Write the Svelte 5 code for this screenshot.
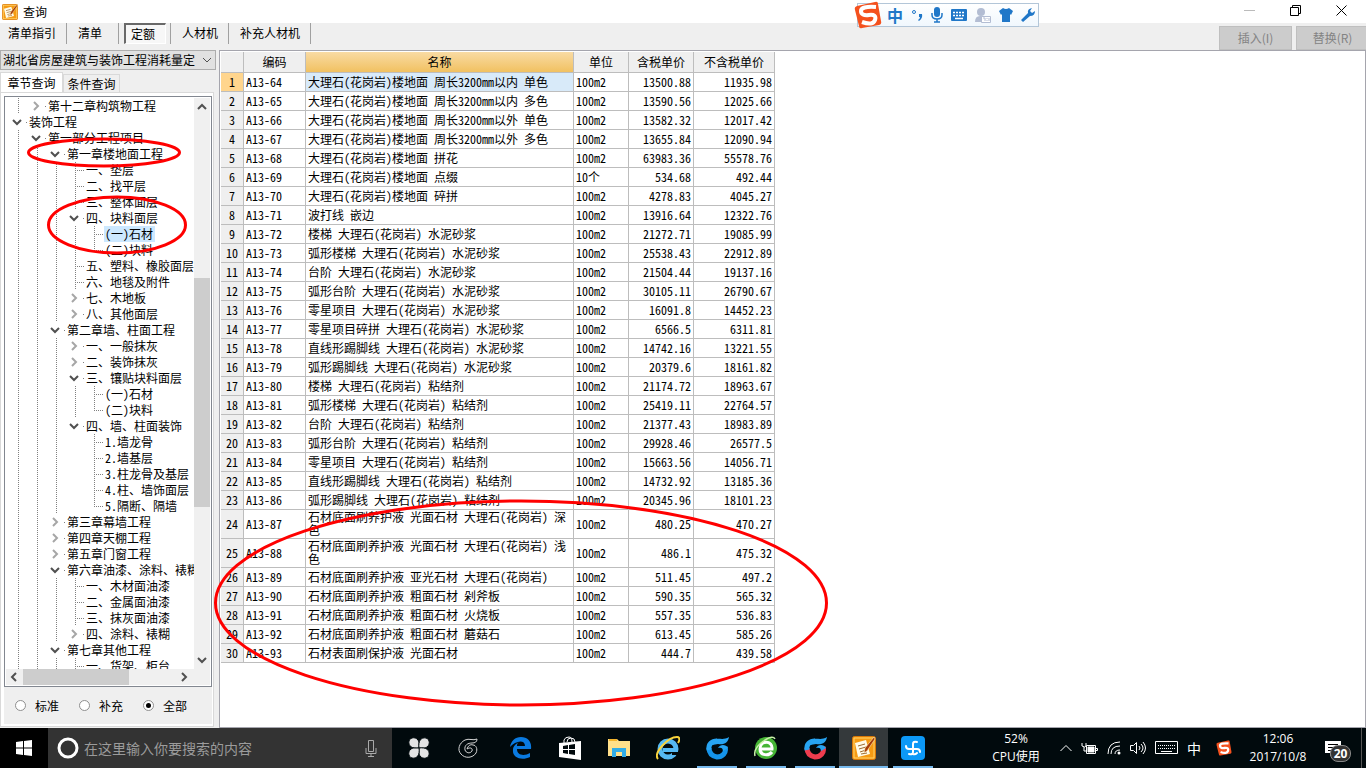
<script lang="ts">
type NodeState = 'open' | 'closed' | 'leaf';
type TreeNode = { depth: number; state: NodeState; text: string };
type Row = [code: string, name: string, unit: string, taxed: string, untaxed: string];

const menu = ['清单指引', '清单', '定额', '人材机', '补充人材机'];
const scopes = ['标准', '补充', '全部'];

const node = (depth: number, state: NodeState, text: string): TreeNode => ({ depth, state, text });

const nodes: TreeNode[] = [
	node(1, 'closed', '第十二章构筑物工程'),
	node(0, 'open', '装饰工程'),
	node(1, 'open', '第一部分工程项目'),
	node(2, 'open', '第一章楼地面工程'),
	node(3, 'leaf', '一、垫层'),
	node(3, 'leaf', '二、找平层'),
	node(3, 'leaf', '三、整体面层'),
	node(3, 'open', '四、块料面层'),
	node(4, 'leaf', '(一)石材'),
	node(4, 'leaf', '(二)块料'),
	node(3, 'leaf', '五、塑料、橡胶面层'),
	node(3, 'leaf', '六、地毯及附件'),
	node(3, 'closed', '七、木地板'),
	node(3, 'closed', '八、其他面层'),
	node(2, 'open', '第二章墙、柱面工程'),
	node(3, 'closed', '一、一般抹灰'),
	node(3, 'closed', '二、装饰抹灰'),
	node(3, 'open', '三、镶贴块料面层'),
	node(4, 'leaf', '(一)石材'),
	node(4, 'leaf', '(二)块料'),
	node(3, 'open', '四、墙、柱面装饰'),
	node(4, 'leaf', '1.墙龙骨'),
	node(4, 'leaf', '2.墙基层'),
	node(4, 'leaf', '3.柱龙骨及基层'),
	node(4, 'leaf', '4.柱、墙饰面层'),
	node(4, 'leaf', '5.隔断、隔墙'),
	node(2, 'closed', '第三章幕墙工程'),
	node(2, 'closed', '第四章天棚工程'),
	node(2, 'closed', '第五章门窗工程'),
	node(2, 'open', '第六章油漆、涂料、裱糊'),
	node(3, 'leaf', '一、木材面油漆'),
	node(3, 'leaf', '二、金属面油漆'),
	node(3, 'leaf', '三、抹灰面油漆'),
	node(3, 'closed', '四、涂料、裱糊'),
	node(2, 'open', '第七章其他工程'),
	node(3, 'leaf', '一、货架、柜台')
];

const rows: Row[] = [
	['A13-64', '大理石(花岗岩)楼地面 周长3200mm以内 单色', '100m2', '13500.88', '11935.98'],
	['A13-65', '大理石(花岗岩)楼地面 周长3200mm以内 多色', '100m2', '13590.56', '12025.66'],
	['A13-66', '大理石(花岗岩)楼地面 周长3200mm以外 单色', '100m2', '13582.32', '12017.42'],
	['A13-67', '大理石(花岗岩)楼地面 周长3200mm以外 多色', '100m2', '13655.84', '12090.94'],
	['A13-68', '大理石(花岗岩)楼地面 拼花', '100m2', '63983.36', '55578.76'],
	['A13-69', '大理石(花岗岩)楼地面 点缀', '10个', '534.68', '492.44'],
	['A13-70', '大理石(花岗岩)楼地面 碎拼', '100m2', '4278.83', '4045.27'],
	['A13-71', '波打线 嵌边', '100m2', '13916.64', '12322.76'],
	['A13-72', '楼梯 大理石(花岗岩) 水泥砂浆', '100m2', '21272.71', '19085.99'],
	['A13-73', '弧形楼梯 大理石(花岗岩) 水泥砂浆', '100m2', '25538.43', '22912.89'],
	['A13-74', '台阶 大理石(花岗岩) 水泥砂浆', '100m2', '21504.44', '19137.16'],
	['A13-75', '弧形台阶 大理石(花岗岩) 水泥砂浆', '100m2', '30105.11', '26790.67'],
	['A13-76', '零星项目 大理石(花岗岩) 水泥砂浆', '100m2', '16091.8', '14452.23'],
	['A13-77', '零星项目碎拼 大理石(花岗岩) 水泥砂浆', '100m2', '6566.5', '6311.81'],
	['A13-78', '直线形踢脚线 大理石(花岗岩) 水泥砂浆', '100m2', '14742.16', '13221.55'],
	['A13-79', '弧形踢脚线 大理石(花岗岩) 水泥砂浆', '100m2', '20379.6', '18161.82'],
	['A13-80', '楼梯 大理石(花岗岩) 粘结剂', '100m2', '21174.72', '18963.67'],
	['A13-81', '弧形楼梯 大理石(花岗岩) 粘结剂', '100m2', '25419.11', '22764.57'],
	['A13-82', '台阶 大理石(花岗岩) 粘结剂', '100m2', '21377.43', '18983.89'],
	['A13-83', '弧形台阶 大理石(花岗岩) 粘结剂', '100m2', '29928.46', '26577.5'],
	['A13-84', '零星项目 大理石(花岗岩) 粘结剂', '100m2', '15663.56', '14056.71'],
	['A13-85', '直线形踢脚线 大理石(花岗岩) 粘结剂', '100m2', '14732.92', '13185.36'],
	['A13-86', '弧形踢脚线 大理石(花岗岩) 粘结剂', '100m2', '20345.96', '18101.23'],
	['A13-87', '石材底面刷养护液 光面石材 大理石(花岗岩) 深色', '100m2', '480.25', '470.27'],
	['A13-88', '石材底面刷养护液 光面石材 大理石(花岗岩) 浅色', '100m2', '486.1', '475.32'],
	['A13-89', '石材底面刷养护液 亚光石材 大理石(花岗岩)', '100m2', '511.45', '497.2'],
	['A13-90', '石材底面刷养护液 粗面石材 剁斧板', '100m2', '590.35', '565.32'],
	['A13-91', '石材底面刷养护液 粗面石材 火烧板', '100m2', '557.35', '536.83'],
	['A13-92', '石材底面刷养护液 粗面石材 蘑菇石', '100m2', '613.45', '585.26'],
	['A13-93', '石材表面刷保护液 光面石材', '100m2', '444.7', '439.58']
];

let activeMenu = $state('定额');
let scope = $state('全部');
let selectedNode = $state(8);
let selectedRow = $state(0);

// the list is cut off at the bottom, so a level that never closes keeps its line
function continues(index: number, level: number): boolean {
	for (const next of nodes.slice(index + 1)) {
		if (next.depth < level) return false;
		if (next.depth === level) return true;
	}
	return true;
}

function guides(index: number): string[] {
	const { depth, state } = nodes[index];
	const out: string[] = [];
	for (let k = 0; k < depth; k++) out.push(continues(index, k) ? 'line' : '');
	out.push(state === 'leaf' ? (continues(index, depth) ? 'line tick' : 'half tick') : '');
	return out;
}
</script>

{#snippet chevron(dir: string)}
	<svg class="chevron" width="10" height="10" viewBox="0 0 10 10" aria-hidden="true">
		{#if dir === 'down'}<path d="M1 3l4 4 4-4" />
		{:else if dir === 'up'}<path d="M1 7l4-4 4 4" />
		{:else if dir === 'left'}<path d="M7 1L3 5l4 4" />
		{:else}<path d="M3 1l4 4-4 4" />{/if}
	</svg>
{/snippet}

{#snippet noteIcon(size: number)}
	<svg width={size} height={size} viewBox="0 0 24 24" aria-hidden="true">
		<rect x="0.5" y="0.5" width="23" height="23" rx="2" fill="#f59a12" stroke="#d97706" />
		<rect x="2" y="2" width="20" height="20" fill="none" stroke="#ffd268" />
		<path d="M3 7l11-3 4 14-12 3z" fill="#fffbe8" />
		<path d="M6 10l7-2M7 13l7-2M8 16l6-2M9 18l6-1" stroke="#9c6a32" fill="none" />
		<path d="M22 1l-9 11-1 5 3-2 8-12z" fill="#a63c08" stroke="#fff0bd" stroke-width="0.6" />
	</svg>
{/snippet}

{#snippet sogou(size: number)}
	<svg width={size} height={size} viewBox="0 0 28 28" aria-hidden="true">
		<path d="M3 5L21 1q3-1 3 2l3 17q1 3-2 4L8 27q-3 1-3-2L1 9q-1-3 2-4z" fill="#f4511e" />
		<path d="M22 6Q7 5 7 10t8 4 6 5-13 2" fill="none" stroke="#fff" stroke-width="4" />
	</svg>
{/snippet}

{#snippet gSwirl(tail: string)}
	<svg width="24" height="24" viewBox="0 0 24 24" fill="none" aria-hidden="true">
		<path d="M20 11c2 6-3 10-8 10-5-1-8-4-8-9" stroke={tail} stroke-width="5" />
		<path d="M4 14C3 8 7 5 12 5" stroke="#27a4f2" stroke-width="5" />
		<path d="M24 1c-1 6-5 8-11 7L7 9l1-5c5-3 10 1 16-3z" fill="#27a4f2" />
		<path d="M23 12c-2-4-8-4-10 0 3-1 5 0 5 3z" fill="#27a4f2" />
	</svg>
{/snippet}

<div class="screen">
	<header class="titlebar">
		{@render noteIcon(16)}
		<h1>查询</h1>
		<div class="window-buttons">
			<button type="button" class="minimize" aria-label="最小化"><svg width="11" height="11"><path d="M0 5.5h11" /></svg></button>
			<button type="button" aria-label="还原"><svg width="11" height="11"><path d="M2.5 2.500v-2h8v8h-2M.5 2.500h8v8h-8z" /></svg></button>
			<button type="button" aria-label="关闭"><svg width="11" height="11"><path d="M.5.5l10 10M10.500.5l-10 10" /></svg></button>
		</div>
	</header>

	<nav class="toolbar">
		{#each menu as item}
			<div class="menu-item">
				<button type="button" class:pressed={activeMenu === item} onclick={() => (activeMenu = item)}>{item}</button>
			</div>
		{/each}
		<div class="actions">
			<button type="button" disabled>插入(I)</button>
			<button type="button" disabled>替换(R)</button>
		</div>
	</nav>

	<main>
		<aside>
			<div class="library">
				<select aria-label="定额库">
					<option>湖北省房屋建筑与装饰工程消耗量定</option>
				</select>
				{@render chevron('down')}
			</div>
			<div class="tabs" role="tablist">
				<button type="button" role="tab" aria-selected="true">章节查询</button>
				<button type="button" role="tab" aria-selected="false">条件查询</button>
			</div>
			<div class="pane">
				<div class="tree-box">
					<div class="tree-view">
						<ul role="tree">
							{#each nodes as item, i}
								<li role="treeitem" aria-selected={selectedNode === i}>
									{#each guides(i) as guide, k}
										<span class="guide {guide}">
											{#if k === item.depth && item.state !== 'leaf'}
												<span class="expander" class:closed={item.state === 'closed'}>
													{@render chevron(item.state === 'open' ? 'down' : 'right')}
												</span>
											{/if}
										</span>
									{/each}
									<button type="button" class:selected={selectedNode === i} onclick={() => (selectedNode = i)}>{item.text}</button>
								</li>
							{/each}
						</ul>
						<div class="scroll vertical">
							{@render chevron('up')}
							<div class="track"><span class="before"></span><span class="thumb"></span><span class="after"></span></div>
							{@render chevron('down')}
						</div>
					</div>
					<div class="scroll horizontal">
						{@render chevron('left')}
						<div class="track"><span class="thumb"></span><span class="after"></span></div>
						{@render chevron('right')}
					</div>
				</div>
				<div class="scopes">
					{#each scopes as option}
						<label><input type="radio" name="scope" value={option} bind:group={scope} />{option}</label>
					{/each}
				</div>
			</div>
		</aside>

		<section class="results">
			<table>
				<colgroup>
					<col class="c-index" /><col class="c-code" /><col class="c-name" /><col class="c-unit" /><col class="c-taxed" /><col class="c-untaxed" />
				</colgroup>
				<thead>
					<tr>
						<th></th>
						<th>编码</th>
						<th class="sorted">名称</th>
						<th>单位</th>
						<th>含税单价</th>
						<th>不含税单价</th>
					</tr>
				</thead>
				<tbody>
					{#each rows as [code, name, unit, taxed, untaxed], i}
						<tr class:current={selectedRow === i} onclick={() => (selectedRow = i)}>
							<th scope="row">{i + 1}</th>
							<td>{code}</td>
							<td class="name">{name}</td>
							<td>{unit}</td>
							<td class="number">{taxed}</td>
							<td class="number">{untaxed}</td>
						</tr>
					{/each}
				</tbody>
			</table>
		</section>
	</main>

	<footer class="taskbar">
		<button type="button" class="start" aria-label="开始">
			<svg width="16" height="16" viewBox="0 0 16 16"><path d="M0 2l7-1v6.500H0zM8 1l8-1v7.500H8zM0 8.500h7V15l-7-1zM8 8.500h8V16l-8-1z" fill="#fff" /></svg>
		</button>
		<label class="search">
			<svg width="22" height="22" viewBox="0 0 22 22" aria-hidden="true"><circle cx="11" cy="11" r="9" fill="none" stroke="#fff" stroke-width="3" /></svg>
			<input type="text" placeholder="在这里输入你要搜索的内容" aria-label="搜索" />
			<svg width="12" height="17" viewBox="0 0 12 17" aria-hidden="true"><path d="M3.500.5h5v11h-5zM1 8v5.500h10V8M6 14v2.500M3 16.500h6" fill="none" stroke="#aaa" /></svg>
		</label>

		<div class="apps">
			<button type="button" aria-label="应用">
				<svg width="22" height="22" viewBox="0 0 22 22" fill="#e4e4e4" stroke="#010a0d">
					<path d="M11 11C4 12 0 9 1 4c1-4 8-5 10 1z" />
					<path d="M11 11C10 4 13 0 18 1c4 1 5 8-1 10z" />
					<path d="M11 11c7-1 11 2 10 7-1 4-8 5-10-1z" />
					<path d="M11 11c1 7-2 11-7 10-4-1-5-8 1-10z" />
				</svg>
			</button>
			<button type="button" aria-label="广联达">
				<svg width="20" height="20" viewBox="0 0 20 20" fill="none" stroke="#d5d5d5">
					<path d="M19 1c-4 2-8-1-12 1-6 3-8 10-4 14 4 5 12 4 15-1 2-4 0-8-3-8-3-1-5 1-6 4 3-2 6-1 5 2-2 3-6 2-7-1-1-5 3-7 7-7 3 0 5-1 5-4z" />
				</svg>
			</button>
			<button type="button" class="edge" aria-label="Edge">
				<svg width="22" height="22" viewBox="0 0 22 22"><path d="M0 10C1 4 5 0 11 0c7 0 11 5 10 12H7c0 7 8 7 13 4v4C12 24 2 21 3 13c0-4 3-6 6-8-2 1-2 3-2 4h8c0-7-10-5-15 1z" fill="#0a7ae0" /></svg>
			</button>
			<button type="button" aria-label="应用商店">
				<svg width="22" height="24" viewBox="0 0 22 24"><path d="M0 7l22-2v19L0 21z" fill="#fff" /><path d="M5 7V4q1-3 5-3 3 0 3 5M8 6q0-4 4-4t4 4" fill="none" stroke="#fff" /><path d="M4 10l5-1v4H4zM10 9l6-1v5h-6zM4 14h5v4l-5-1zM10 14h6v5l-6-1z" fill="#010a0d" /></svg>
			</button>
			<button type="button" aria-label="文件资源管理器">
				<svg width="22" height="20" viewBox="0 0 22 20"><path d="M0 1h9l2 2h11v15H0z" fill="#ffe08a" /><path d="M1 1h8v2H1z" fill="#f4b52d" /><path d="M4 10h14v9h-4v-5H8v5H4z" fill="#31ace6" /></svg>
			</button>
			<button type="button" aria-label="Internet Explorer">
				<svg width="24" height="24" viewBox="0 0 24 24"><circle cx="12" cy="13" r="8" fill="none" stroke="#55b9f3" stroke-width="5" /><path d="M7 14h15" stroke="#55b9f3" stroke-width="4" /><path d="M16 16h8v3h-8z" fill="#010a0d" /><path d="M2 23C-3 17 12 1 21 1c3 0 3 3 1 6" fill="none" stroke="#f9d33c" stroke-width="2" /></svg>
			</button>
			<button type="button" class="running" aria-label="广联达计价">{@render gSwirl('#1494ea')}</button>
			<button type="button" class="running" aria-label="浏览器">
				<svg width="24" height="24" viewBox="0 0 24 24"><circle cx="12" cy="12" r="11" fill="#46b536" /><path d="M6 13h12c1-9-12-9-12 0 0 7 9 7 12 3" fill="none" stroke="#fff" stroke-width="3" /><path d="M1 20Q-1 12 11 4q8-5 10-1" fill="none" stroke="#c9f1a9" stroke-width="1.500" /></svg>
			</button>
			<button type="button" class="running" aria-label="广联达算量">{@render gSwirl('#ee3c4e')}</button>
			<button type="button" class="running active" aria-label="查询">{@render noteIcon(24)}</button>
			<button type="button" class="running" aria-label="助手">
				<svg width="24" height="24" viewBox="0 0 24 24"><rect width="24" height="24" rx="4" fill="#0c99f7" /><path d="M16 6q-4-1-4 2v8q0 3-4 2M5 10q0 3 3 3h8q3 0 3 3M12 18q2 1 4-1" fill="none" stroke="#fff" stroke-width="2" stroke-linecap="round" /></svg>
			</button>
		</div>

		<div class="tray">
			<div class="cpu"><span>52%</span><span>CPU使用</span></div>
			<svg width="12" height="8" viewBox="0 0 12 8" aria-hidden="true"><path d="M.5 7L6 1.500 11.500 7" /></svg>
			<svg width="17" height="13" viewBox="0 0 17 13" aria-hidden="true"><path d="M5.500 3.500h9v8h-9zM15 6.500h1.500v2H15M1 1v3q3 2 4 0V1M3 5v4h2" /><path d="M7 5h6v5H7z" fill="#fff" /></svg>
			<svg width="14" height="14" viewBox="0 0 14 14" aria-hidden="true"><path d="M1 13Q1 1 13 1M4 13q0-8 9-8M8 13q0-4 5-4" /><circle cx="12" cy="12" r="1.500" fill="#fff" /></svg>
			<svg width="16" height="14" viewBox="0 0 16 14" aria-hidden="true"><path d="M.5 4.500h3l3-3v11l-3-3h-3zM9 5q2 2 0 4M11 3q4 4 0 8M13 1q5 6 0 12" /></svg>
			<svg width="23" height="14" viewBox="0 0 23 14" aria-hidden="true"><path d="M.5.5h22v12H.5z" /><path d="M3 4.500h17M3 7.500h17" stroke-dasharray="1 1" /><path d="M6 10.500h11" /></svg>
			<span class="lang">中</span>
			{@render sogou(16)}
			<div class="clock"><span>12:06</span><span>2017/10/8</span></div>
			<button type="button" class="notices" aria-label="通知">
				<svg width="16" height="15" viewBox="0 0 16 15"><path d="M0 0h16v12H8l-3 3v-3H0z" fill="#fff" stroke="none" /><path d="M3 3.500h10M3 6.500h10M3 9.500h6" stroke="#000" /></svg>
				<span class="count">20</span>
			</button>
			<span class="peek"></span>
		</div>
	</footer>

	<div class="ime">
		{@render sogou(28)}
		<span>中</span>
		<svg width="12" height="12" viewBox="0 0 12 12"><circle cx="3" cy="3" r="1.500" fill="none" stroke="#2077c8" /><path d="M8 5h3q1 4-3 7l-1-1q2-1 2-3H8z" /></svg>
		<svg width="12" height="16" viewBox="0 0 12 16"><rect x="3" width="6" height="10" rx="3" /><path d="M1 6v2q0 4 5 4t5-4V6M6 12v3M3 15h6" fill="none" stroke="#2077c8" stroke-width="1.500" /></svg>
		<svg width="16" height="12" viewBox="0 0 16 12"><rect width="16" height="12" rx="1" /><path d="M2 3.500h12M2 6.500h12" stroke="#fff" stroke-width="1.500" stroke-dasharray="2 1" /><path d="M4 9.500h8" stroke="#fff" stroke-width="1.500" /></svg>
		<svg width="16" height="15" viewBox="0 0 16 15"><circle cx="6" cy="4" r="4" fill="#b3bdd3" /><path d="M0 14q0-6 5-6h4v6z" fill="#b3bdd3" /><path d="M6.500 8.500h9v6h-9z" fill="#fff" stroke="#b3bdd3" /><path d="M8 10h2v3M12 10v1M12 12v1M14 10v3" stroke="#b3bdd3" fill="none" /></svg>
		<svg width="14" height="14" viewBox="0 0 14 14"><path d="M4 0q3 2 6 0l4 3-2 4-1-1v8H3V6L2 7 0 3z" /></svg>
		<svg width="14" height="14" viewBox="0 0 14 14"><path d="M0 12l7-7q-1-4 4-5L9 3l2 2 3-2q0 5-5 5l-7 6z" /></svg>
	</div>

	<svg class="marks" aria-hidden="true">
		<ellipse cx="104" cy="152.5" rx="75.5" ry="13.5" />
		<ellipse cx="117" cy="225" rx="68.5" ry="28" />
		<ellipse cx="521" cy="603" rx="305.5" ry="102" />
	</svg>
</div>

<style>
:global(body) {
	margin: 0;
}

.screen {
	--face: #efefef;
	--grid: #bdbdbd;
	position: relative;
	display: flex;
	flex-direction: column;
	height: 100vh;
	overflow: hidden;
	font-family: 'Noto Sans CJK SC', sans-serif;
	font-size: 12px;
	line-height: 16px;
	color: #000;
	background: #fff;
	/* half-width Latin, so digits line up with the Chinese grid */
	font-feature-settings: 'hwid';
}

.screen * {
	box-sizing: border-box;
}

button,
input,
select {
	padding: 0;
	margin: 0;
	font: inherit;
	font-feature-settings: inherit;
	color: inherit;
	background: none;
	border: 0;
	border-radius: 0;
}

svg {
	flex-shrink: 0;
}

.chevron path {
	fill: none;
	stroke: #505050;
	stroke-width: 2;
}

.titlebar {
	display: flex;
	flex-shrink: 0;
	gap: 5px;
	align-items: center;
	height: 23px;
	padding-left: 2px;
}

h1 {
	margin: 0;
	font-size: 12px;
	font-weight: 400;
}

.window-buttons {
	display: flex;
	margin: 0 2px 2px auto;
}

.window-buttons button {
	display: flex;
	align-items: center;
	justify-content: center;
	width: 46px;
	height: 20px;
}

.window-buttons path {
	fill: none;
	stroke: #000;
}

.window-buttons .minimize path {
	stroke: #bbb;
}

.toolbar {
	display: flex;
	flex-shrink: 0;
	height: 27px;
	background: var(--face);
}

.menu-item {
	display: flex;
	height: 21px;
	padding: 0 4px 0 5px;
	border-right: 1px solid #a0a0a0;
}

.menu-item:first-child {
	padding-left: 2px;
}

.menu-item button {
	padding: 0 5px 2px;
	border: 1px solid transparent;
}

.menu-item:nth-child(2) button {
	padding-right: 11px;
}

.menu-item button.pressed {
	padding: 0 10px 0 5px;
	background: #f7f7f7;
	border-color: #696969 #fff #fff #696969;
	border-width: 2px 1px 1px 2px;
}

.actions {
	display: flex;
	gap: 4px;
	margin-right: -3px;
	margin-left: auto;
	font-feature-settings: normal;
}

.actions button {
	width: 73px;
	height: 24px;
	margin-top: 3px;
	color: #838383;
	background: #ccc;
	border: 1px solid #bfbfbf;
}

main {
	display: flex;
	flex: 1;
	min-height: 0;
}

aside {
	display: flex;
	flex-direction: column;
	flex-shrink: 0;
	width: 219px;
	padding-right: 3px;
	background: var(--face);
}

.library {
	display: grid;
	flex-shrink: 0;
	align-items: center;
	height: 20px;
	overflow: hidden;
	background: #e1e1e1;
	border: 1px solid #adadad;
}

.library select,
.library .chevron {
	grid-area: 1 / 1;
}

.library select {
	width: 100%;
	height: 18px;
	padding: 0 18px 0 2px;
	appearance: none;
}

.library .chevron {
	justify-self: end;
	margin-right: 3px;
	pointer-events: none;
}

.library .chevron path {
	stroke-width: 1;
}

.tabs {
	display: flex;
	flex-shrink: 0;
	align-items: flex-end;
	height: 22px;
	padding-top: 2px;
}

.tabs button {
	width: 57px;
	height: 18px;
	border: 1px solid #d9d9d9;
	border-bottom: 0;
}

.tabs button[aria-selected='true'] {
	width: 63px;
	height: 20px;
	background: #fff;
}

.pane {
	display: flex;
	flex: 1;
	flex-direction: column;
	min-height: 0;
	padding: 3px 1px 2px 3px;
	margin: 0 2px 1px 0;
	background: #fff;
	border: 1px solid #d9d9d9;
}

.tree-box {
	display: flex;
	flex: 1;
	flex-direction: column;
	min-height: 0;
	padding: 1px;
	background: #fff;
	border: 1px solid #828790;
}

.tree-view {
	display: flex;
	flex: 1;
	min-height: 0;
}

ul {
	flex: 1;
	min-width: 0;
	padding: 0 0 0 3px;
	margin: 0;
	overflow: hidden;
	list-style: none;
}

li {
	display: flex;
	height: 16px;
	white-space: nowrap;
}

li button {
	flex-shrink: 0;
	height: 16px;
	padding: 0 2px 0 1px;
	line-height: 16px;
}

li button.selected {
	background: #cce8ff;
}

.guide {
	display: grid;
	flex-shrink: 0;
	grid-template-rows: 8px 8px;
	grid-template-columns: 9px 10px;
	width: 19px;
}

.guide.line::before,
.guide.half::before {
	grid-row: 1 / 3;
	grid-column: 2;
	width: 1px;
	content: '';
	background: repeating-linear-gradient(#808080 0 1px, transparent 1px 2px);
}

.guide.half::before {
	grid-row: 1;
}

.guide.tick::after {
	grid-row: 2;
	grid-column: 2;
	width: 9px;
	height: 1px;
	content: '';
	background: repeating-linear-gradient(90deg, #808080 0 1px, transparent 1px 2px);
}

.expander {
	display: flex;
	grid-row: 1 / 3;
	grid-column: 1 / 3;
	align-items: center;
	padding-left: 3px;
}

.expander::after {
	width: 1px;
	height: 1px;
	margin-left: 4px;
	content: '';
	background: #808080;
}

.expander.closed .chevron path {
	stroke: #a6a6a6;
}

.scroll {
	display: flex;
	flex-shrink: 0;
	align-items: center;
	justify-content: space-between;
	background: #f0f0f0;
}

.scroll .track {
	display: flex;
	flex: 1;
}

.thumb {
	background: #cdcdcd;
}

.vertical {
	flex-direction: column;
	width: 16px;
	padding: 4px 0;
}

.vertical .track {
	flex-direction: column;
	width: 16px;
	margin: 3px 0;
}

.vertical .before {
	flex: 163;
}

.vertical .thumb {
	flex: 229;
}

.vertical .after {
	flex: 145;
}

.horizontal {
	height: 16px;
	padding: 0 21px 0 3px;
}

.horizontal .track {
	height: 16px;
	margin: 0 4px;
}

.horizontal .thumb {
	flex: 105;
}

.horizontal .after {
	flex: 46;
}

.scopes {
	display: flex;
	flex-shrink: 0;
	gap: 20px;
	height: 37px;
	padding-left: 11px;
	background: var(--face);
}

.scopes label {
	display: flex;
	gap: 9px;
	align-items: center;
}

.scopes input {
	display: grid;
	place-items: center;
	width: 11px;
	height: 11px;
	appearance: none;
	background: #fff;
	border: 1px solid #8f8f8f;
	border-radius: 50%;
}

.scopes input:checked::before {
	width: 5px;
	height: 5px;
	content: '';
	background: #000;
	border-radius: 50%;
}

.results {
	flex: 1;
	min-width: 0;
	padding: 1px;
	overflow: hidden;
	background: #fff;
	border: 1px solid #a5a5ad;
}

table {
	width: 554px;
	table-layout: fixed;
	border-spacing: 0;
}

.c-index {
	width: 23px;
}

.c-code {
	width: 62px;
}

.c-name {
	width: 268px;
}

.c-unit {
	width: 55px;
}

.c-taxed {
	width: 65px;
}

.c-untaxed {
	width: 81px;
}

th,
td {
	height: 19px;
	padding: 0 2px 2px;
	font-weight: 400;
	line-height: 13px;
	text-align: left;
	border: solid var(--grid);
	border-width: 0 1px 1px 0;
}

th {
	padding: 0 0 2px;
	text-align: center;
	background: var(--face);
}

thead th {
	height: 21px;
}

th.sorted {
	background: linear-gradient(#f9dba4, #f1c161);
}

.current th {
	background: #ffd58d;
}

.current .name {
	background: #d8eaf9;
}

td.number {
	text-align: right;
}

.taskbar {
	display: flex;
	flex-shrink: 0;
	height: 40px;
	color: #fff;
	background: #010a0d;
	font-feature-settings: normal;
}

.start {
	display: flex;
	flex-shrink: 0;
	align-items: center;
	justify-content: center;
	width: 48px;
	background: #000;
}

.search {
	display: flex;
	flex-shrink: 0;
	gap: 5px;
	align-items: center;
	width: 344px;
	padding: 0 15px 0 9px;
	background: #333;
}

.search input {
	flex: 1;
	min-width: 0;
	font-size: 14px;
}

.search input::placeholder {
	color: #9b9b9b;
	opacity: 1;
}

.apps {
	display: flex;
	flex-shrink: 0;
	padding-left: 2px;
}

.apps button {
	display: flex;
	align-items: center;
	justify-content: center;
	width: 49px;
}

.apps .edge {
	margin-left: 4px;
}

.apps .running {
	background: linear-gradient(#76b9ed, #76b9ed) bottom / 40px 2px no-repeat;
}

.apps .active {
	background: linear-gradient(#76b9ed, #76b9ed) bottom / 100% 2px no-repeat #34393b;
}

.tray {
	display: flex;
	gap: 9px;
	align-items: center;
	margin-left: auto;
}

.tray > svg path {
	stroke: #fff;
}

.tray > svg path:not([fill]) {
	fill: none;
}

.tray > svg path[fill='#f4511e'] {
	stroke: none;
}

.cpu,
.clock {
	display: flex;
	flex-direction: column;
	width: 60px;
	font-family: 'Open Sans', 'Noto Sans CJK SC', sans-serif;
	line-height: 18px;
	text-align: center;
	white-space: nowrap;
}

.cpu {
	width: 70px;
}

.clock {
	margin-left: 7px;
}

.lang {
	margin-right: 6px;
	font-size: 14px;
}

.notices {
	position: relative;
	display: flex;
	width: 32px;
	margin-left: 8px;
}

.count {
	position: absolute;
	top: 4px;
	left: 5px;
	width: 21px;
	font-family: 'Open Sans', sans-serif;
	font-weight: 700;
	line-height: 15px;
	text-align: center;
	background: #333;
	border: 1px solid #888;
	border-radius: 8px;
}

.peek {
	width: 5px;
	height: 40px;
	margin-left: -5px;
	border-left: 1px solid #555;
}

/* floating input method bar, dragged above the window */
.ime {
	position: absolute;
	top: 3px;
	left: 857px;
	display: flex;
	gap: 8px;
	align-items: center;
	width: 182px;
	height: 24px;
	font-size: 16px;
	font-weight: 700;
	color: #2077c8;
	background: linear-gradient(#fff, #f0f7fd);
	border: 1px solid #b3c6d8;
	fill: #2077c8;
}

.ime > svg:first-child {
	margin: 0 -3px 0 -4px;
}

.marks {
	position: absolute;
	inset: 0;
	width: 100%;
	height: 100%;
	pointer-events: none;
}

.marks ellipse {
	fill: none;
	stroke: #f00;
	stroke-width: 3;
}
</style>
